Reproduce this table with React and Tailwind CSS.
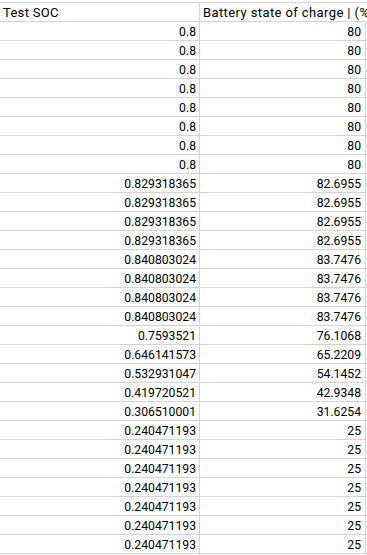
const col1 = [
  "0.8","0.8","0.8","0.8","0.8","0.8","0.8","0.8",
  "0.829318365","0.829318365","0.829318365","0.829318365",
  "0.840803024","0.840803024","0.840803024","0.840803024",
  "0.7593521","0.646141573","0.532931047","0.419720521","0.306510001",
  "0.240471193","0.240471193","0.240471193","0.240471193","0.240471193","0.240471193","0.240471193",
];
const col2 = [
  "80","80","80","80","80","80","80","80",
  "82.6955","82.6955","82.6955","82.6955",
  "83.7476","83.7476","83.7476","83.7476",
  "76.1068","65.2209","54.1452","42.9348","31.6254",
  "25","25","25","25","25","25","25",
];

export default function App() {
  return (
    <div className="w-[367px] h-[555px] overflow-hidden bg-white pt-[2px] text-black" style={{ fontFamily: "Roboto, sans-serif" }}>
      <div className="border-t border-[#d4d4d4] w-[367px]">
        <div className="flex h-[19px] border-b border-[#d4d4d4]">
          <div className="w-[200px] shrink-0 border-r border-[#d4d4d4] pl-[3px] text-[13px] tracking-[0.3px] leading-[18px] pt-[1px] whitespace-nowrap">Test SOC</div>
          <div className="w-[167px] shrink-0 pl-[3px] text-[13px] tracking-[0.4px] leading-[18px] pt-[1px] whitespace-nowrap">Battery state of charge | (%)</div>
        </div>
        {col1.map((v, i) => (
          <div key={i} className="flex h-[19px] border-b border-[#d4d4d4]">
            <div className="w-[200px] shrink-0 border-r border-[#d4d4d4] pr-[3px] text-right text-[12.2px] leading-[18px] pt-[1px]">{v}</div>
            <div className="w-[166px] shrink-0 border-r border-[#d4d4d4] pr-[4px] text-right text-[12.2px] leading-[18px] pt-[1px]">{col2[i]}</div>
          </div>
        ))}
      </div>
    </div>
  );
}
